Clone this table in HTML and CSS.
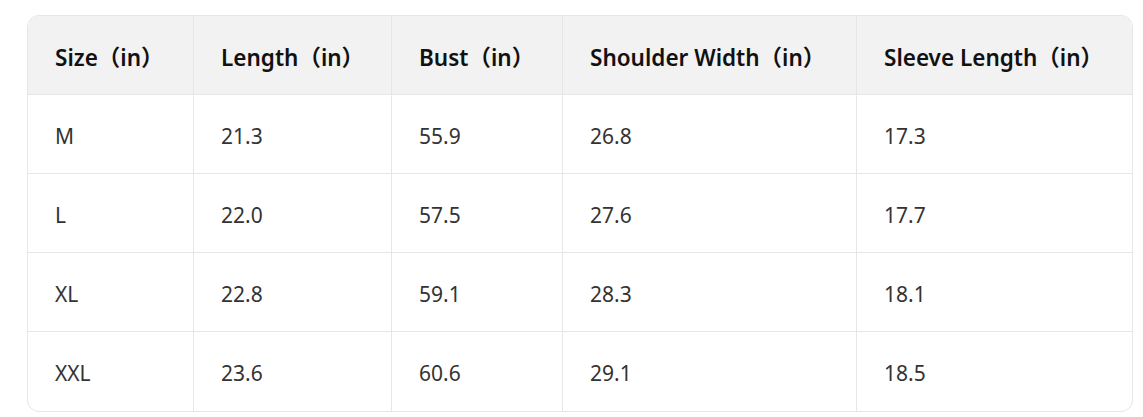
FILE: index.html
```html
<!DOCTYPE html>
<html lang="en">
<head>
<meta charset="utf-8">
<link rel="stylesheet" href="styles.css">
</head>
<body>
<div class="wrap">
  <table class="size-table">
    <colgroup>
      <col class="c1"><col class="c2"><col class="c3"><col class="c4"><col class="c5">
    </colgroup>
    <thead>
      <tr><th>Size（in）</th><th>Length（in）</th><th>Bust（in）</th><th>Shoulder Width（in）</th><th>Sleeve Length（in）</th></tr>
    </thead>
    <tbody>
      <tr><td>M</td><td>21.3</td><td>55.9</td><td>26.8</td><td>17.3</td></tr>
      <tr><td>L</td><td>22.0</td><td>57.5</td><td>27.6</td><td>17.7</td></tr>
      <tr><td>XL</td><td>22.8</td><td>59.1</td><td>28.3</td><td>18.1</td></tr>
      <tr><td>XXL</td><td>23.6</td><td>60.6</td><td>29.1</td><td>18.5</td></tr>
    </tbody>
  </table>
</div>
</body>
</html>
```
FILE: styles.css
```css
html, body { margin: 0; padding: 0; background: #fff; }
body { font-family: "Noto Sans", "Noto Sans CJK SC", sans-serif; color: #222; }
.wrap { padding: 15px 12px 0 27px; }
.size-table {
  width: 1104px;
  table-layout: fixed;
  border-collapse: separate;
  border-spacing: 0;
  border: 1px solid #e6e6e6;
  border-radius: 12px;
  overflow: hidden;
}
.c1 { width: 166px; }
.c2 { width: 198px; }
.c3 { width: 171px; }
.c4 { width: 294px; }
.c5 { width: 275px; }
th, td {
  text-align: left;
  height: 79px;
  padding: 0 0 0 27px;
  box-sizing: border-box;
  border-right: 1px solid #e6e6e6;
  border-bottom: 1px solid #e6e6e6;
  white-space: nowrap;
}
th:last-child, td:last-child { border-right: none; }
tbody tr:last-child td { border-bottom: none; }
th { background: #f2f2f2; font-weight: 600; color: #111; font-size: 22.5px; padding-top: 2px; }
td { font-weight: 400; color: #333; font-size: 21px; padding-top: 3px; }
.size-table thead th:first-child { height: 78px; }
```
